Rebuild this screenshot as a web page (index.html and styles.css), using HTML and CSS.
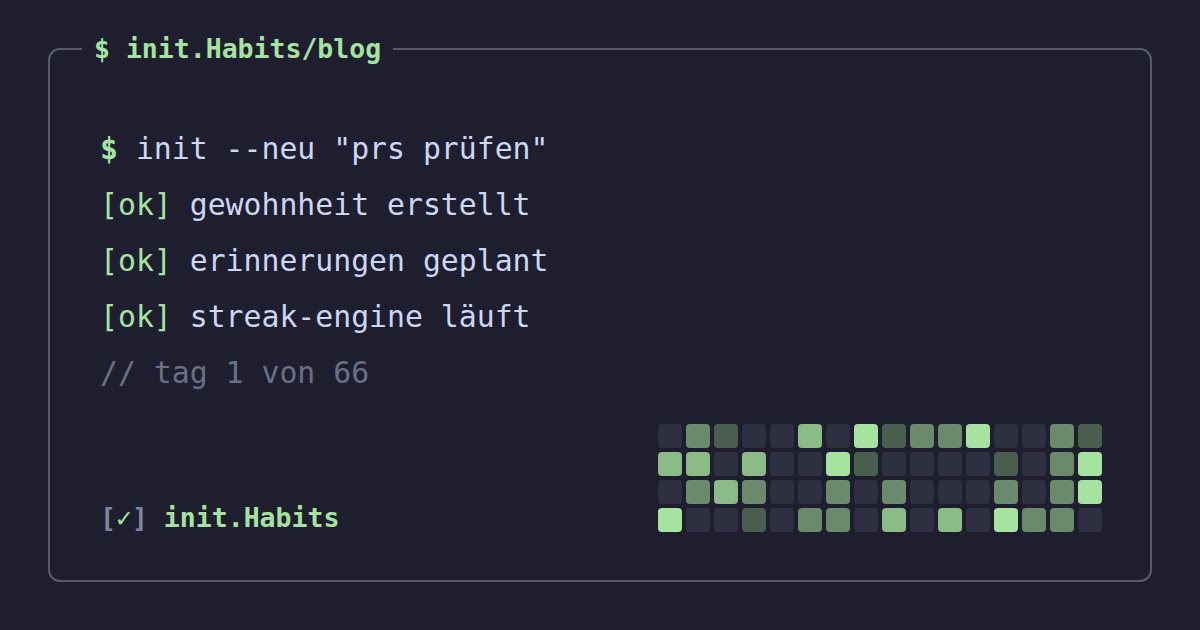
FILE: index.html
```html
<!DOCTYPE html>
<html lang="de">
<head>
<meta charset="utf-8">
<title>init.Habits/blog</title>
<link rel="stylesheet" href="styles.css">
</head>
<body>
<main class="frame">
  <div class="title">$ init.Habits/blog</div>
  <div class="log">
    <div class="line"><span class="prompt">$</span> init --neu "prs prüfen"</div>
    <div class="line"><span class="ok">[ok]</span> gewohnheit erstellt</div>
    <div class="line"><span class="ok">[ok]</span> erinnerungen geplant</div>
    <div class="line"><span class="ok">[ok]</span> streak-engine läuft</div>
    <div class="line comment">// tag 1 von 66</div>
  </div>
  <div class="footer">
    <div class="brand"><span class="br">[</span><span class="check">✓</span><span class="br">]</span> init.Habits</div>
    <div class="grid">
      <i class="c0"></i><i class="c2"></i><i class="c1"></i><i class="c0"></i><i class="c0"></i><i class="c3"></i><i class="c0"></i><i class="c4"></i><i class="c1"></i><i class="c2"></i><i class="c2"></i><i class="c4"></i><i class="c0"></i><i class="c0"></i><i class="c2"></i><i class="c1"></i>
      <i class="c3"></i><i class="c3"></i><i class="c0"></i><i class="c3"></i><i class="c0"></i><i class="c0"></i><i class="c4"></i><i class="c1"></i><i class="c0"></i><i class="c0"></i><i class="c0"></i><i class="c0"></i><i class="c1"></i><i class="c0"></i><i class="c2"></i><i class="c4"></i>
      <i class="c0"></i><i class="c2"></i><i class="c3"></i><i class="c2"></i><i class="c0"></i><i class="c0"></i><i class="c2"></i><i class="c0"></i><i class="c2"></i><i class="c0"></i><i class="c0"></i><i class="c0"></i><i class="c2"></i><i class="c0"></i><i class="c2"></i><i class="c4"></i>
      <i class="c4"></i><i class="c0"></i><i class="c0"></i><i class="c1"></i><i class="c0"></i><i class="c2"></i><i class="c2"></i><i class="c0"></i><i class="c3"></i><i class="c0"></i><i class="c3"></i><i class="c0"></i><i class="c4"></i><i class="c2"></i><i class="c2"></i><i class="c0"></i>
    </div>
  </div>
</main>
</body>
</html>
```

FILE: styles.css
```css
* { box-sizing: border-box; }

html, body {
  margin: 0;
  padding: 0;
  background: #1e1e2e;
  width: 1200px;
  height: 630px;
  overflow: hidden;
}

body {
  padding: 48px;
  font-family: "DejaVu Sans Mono", "Liberation Mono", monospace;
  color: #cdd6f4;
}

.frame {
  position: relative;
  width: 1104px;
  height: 534px;
  border: 2px solid #585b70;
  border-radius: 12px;
  padding: 71px 48px 48px 50px;
  display: flex;
  flex-direction: column;
}

.title {
  position: absolute;
  top: -17px;
  left: 32px;
  padding: 0 12px;
  background: #1e1e2e;
  color: #a6e3a1;
  font-weight: bold;
  font-size: 26.5px;
  line-height: 32px;
}

.log {
  display: flex;
  flex-direction: column;
}

.line {
  font-size: 29.8px;
  line-height: 56px;
  height: 56px;
  white-space: pre;
}

.prompt { color: #a6e3a1; font-weight: bold; }
.ok { color: #a6e3a1; }
.comment { color: #6c7086; }

.footer {
  margin-top: auto;
  display: flex;
  justify-content: space-between;
  align-items: flex-end;
}

.brand {
  font-size: 26.5px;
  line-height: 28px;
  font-weight: bold;
  color: #a6e3a1;
  white-space: pre;
}

.br { color: #7f849c; }
.check { color: #a6e3a1; }

.grid {
  display: grid;
  grid-template-columns: repeat(16, 24px);
  grid-auto-rows: 24px;
  gap: 4px;
}

.grid i {
  display: block;
  border-radius: 4px;
}

.c0 { background: #2f2f42; }
.c1 { background: #4a5e50; }
.c2 { background: #6a8a6b; }
.c3 { background: #8bbb86; }
.c4 { background: #a6e3a1; }
```
